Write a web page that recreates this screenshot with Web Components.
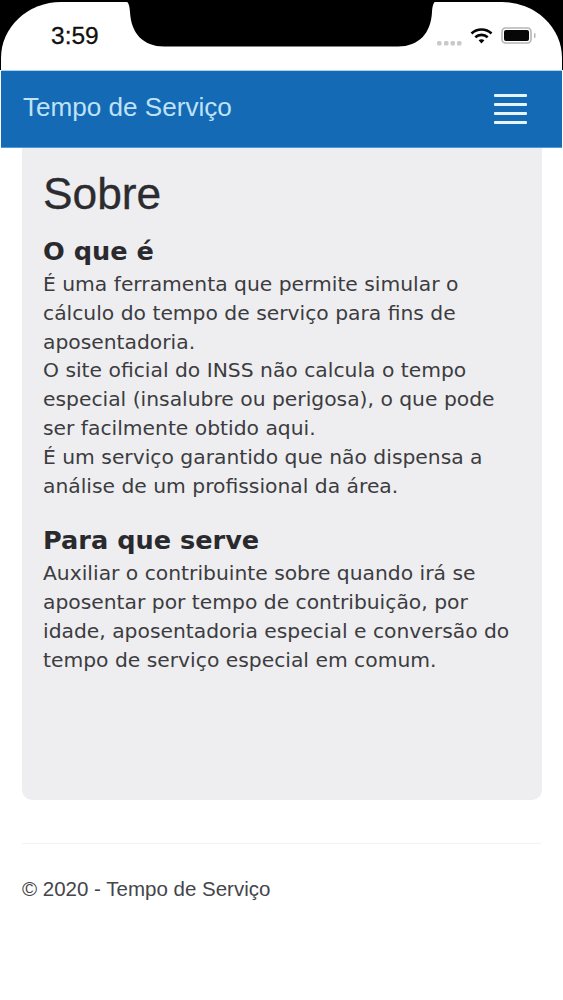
<!DOCTYPE html>
<html lang="pt">
<head>
<meta charset="utf-8">
<title>Tempo de Serviço</title>
<style>
  html, body { margin: 0; background: #fff; }
</style>
</head>
<body>
<status-bar time="3:59"></status-bar>
<nav-bar brand="Tempo de Serviço"></nav-bar>
<about-card heading="Sobre">
  <info-section title="O que é">É uma ferramenta que permite simular o cálculo do tempo de serviço para fins de aposentadoria.<br>O site oficial do INSS não calcula o tempo especial (insalubre ou perigosa), o que pode ser facilmente obtido aqui.<br>É um serviço garantido que não dispensa a análise de um profissional da área.</info-section>
  <info-section title="Para que serve">Auxiliar o contribuinte sobre quando irá se aposentar por tempo de contribuição, por idade, aposentadoria especial e conversão do tempo de serviço especial em comum.</info-section>
</about-card>
<page-footer>© 2020 - Tempo de Serviço</page-footer>

<script>
class StatusBar extends HTMLElement {
  constructor() {
    super();
    this.attachShadow({ mode: 'open' });
    this.shadowRoot.innerHTML = `
      <style>
        :host { display: block; position: relative; box-sizing: border-box; height: 70px; padding: 2px 1px 0; background: #000; }
        .screen {
          height: 68px;
          background: #fff;
          border-radius: 60px 60px 0 0 / 56px 56px 0 0;
          display: flex;
          justify-content: space-between;
          font-family: "Liberation Sans", Arial, sans-serif;
        }
        .time { margin: 21px 0 0 50px; font-size: 24.500px; line-height: 26px; color: #111; -webkit-text-stroke: .3px #111; }
        .icons { display: flex; align-items: flex-start; gap: 8px; margin: 25px 25px 0 0; }
        .notch { position: absolute; left: 124px; top: 0; }
        svg { display: block; }
      </style>
      <div class="screen">
        <span class="time">${this.getAttribute('time')}</span>
        <div class="icons">
          <svg width="25" height="6" viewBox="0 0 25 6" style="margin-top:13px"><g fill="#c9c9cb"><rect x="0" y="1" width="4.500" height="4.500" rx="1.500"/><rect x="7" y="1" width="4.500" height="4.500" rx="1.500"/><rect x="13.500" y="1" width="4.500" height="4.500" rx="1.500"/><rect x="20" y="1" width="4.500" height="4.500" rx="1.500"/></g></svg>
          <svg width="23" height="18" viewBox="0 0 23 18"><g fill="none" stroke="#050505" stroke-width="2.600"><path d="M1.500 6.500C7 1.200 16 1.200 21.500 6.500"/><path d="M5.300 10.300C8.700 7 14.300 7 17.700 10.300"/></g><path d="M8.600 13.300C10.300 11.800 12.700 11.800 14.400 13.300L11.500 16.600Z" fill="#050505"/></svg>
          <svg width="36" height="18" viewBox="0 0 36 18"><rect x="1" y="1" width="29" height="15" rx="3.500" fill="none" stroke="#b5b5b7" stroke-width="1.600"/><rect x="3" y="3" width="25" height="11" rx="2" fill="#070707"/><rect x="33" y="6" width="1.500" height="5" rx=".7" fill="#b5b5b7"/></svg>
        </div>
      </div>
      <svg class="notch" width="314" height="47" viewBox="0 0 314 47"><path d="M0 0H314C310 1 308.500 4 308 12C307 33 295 46.500 274 46.500H40C19 46.500 7 33 6 12C5.500 4 4 1 0 0Z" fill="#000"/></svg>`;
  }
}
customElements.define('status-bar', StatusBar);

class NavBar extends HTMLElement {
  constructor() {
    super();
    this.attachShadow({ mode: 'open' });
    this.shadowRoot.innerHTML = `
      <style>
        :host {
          display: flex;
          align-items: center;
          justify-content: space-between;
          box-sizing: border-box;
          height: 78px;
          margin: 0 1px;
          padding: 0 35px 0 22px;
          background: #146ab5;
          border-top: 1px solid #a9d3ee;
          border-bottom: 1px solid #4e9ad4;
        }
        .brand { font: 26.100px "Liberation Sans", Arial, sans-serif; color: #bfe2f7; position: relative; top: -2px; }
        .toggler { display: flex; flex-direction: column; gap: 5.700px; width: 33px; }
        .toggler i { display: block; height: 3px; border-radius: 1px; background: #e6f4fd; }
      </style>
      <span class="brand">${this.getAttribute('brand')}</span>
      <div class="toggler"><i></i><i></i><i></i><i></i></div>`;
  }
}
customElements.define('nav-bar', NavBar);

class AboutCard extends HTMLElement {
  constructor() {
    super();
    this.attachShadow({ mode: 'open' });
    this.shadowRoot.innerHTML = `
      <style>
        :host {
          display: block;
          box-sizing: border-box;
          height: 652px;
          margin: 0 21px 0 22px;
          padding: 22px 21px 0;
          background: #eeeef0;
          border-radius: 0 0 10px 10px;
        }
        h1 { margin: 0 0 15px; font: 400 44.300px/48px "Liberation Sans", Arial, sans-serif; color: #2c2c30; -webkit-text-stroke: .3px #2c2c30; }
        ::slotted(info-section) { margin-bottom: 22px; }
      </style>
      <h1>${this.getAttribute('heading')}</h1>
      <slot></slot>`;
  }
}
customElements.define('about-card', AboutCard);

class InfoSection extends HTMLElement {
  constructor() {
    super();
    this.attachShadow({ mode: 'open' });
    this.shadowRoot.innerHTML = `
      <style>
        :host { display: block; font-family: "DejaVu Sans", Verdana, sans-serif; color: #3c3c40; }
        h2 { margin: 0; font-size: 25.600px; line-height: 37px; font-weight: 700; color: #2a2a2e; }
        p { margin: 0; font-size: 20.300px; line-height: 28.800px; }
      </style>
      <h2>${this.getAttribute('title')}</h2>
      <p><slot></slot></p>`;
  }
}
customElements.define('info-section', InfoSection);

class PageFooter extends HTMLElement {
  constructor() {
    super();
    this.attachShadow({ mode: 'open' });
    this.shadowRoot.innerHTML = `
      <style>
        :host {
          display: block;
          margin: 43px 22px 0;
          padding-top: 32px;
          border-top: 1px solid #f2f2f3;
          font: 20.500px/26px "Liberation Sans", Arial, sans-serif;
          color: #45454a;
        }
      </style>
      <slot></slot>`;
  }
}
customElements.define('page-footer', PageFooter);
</script>
</body>
</html>
